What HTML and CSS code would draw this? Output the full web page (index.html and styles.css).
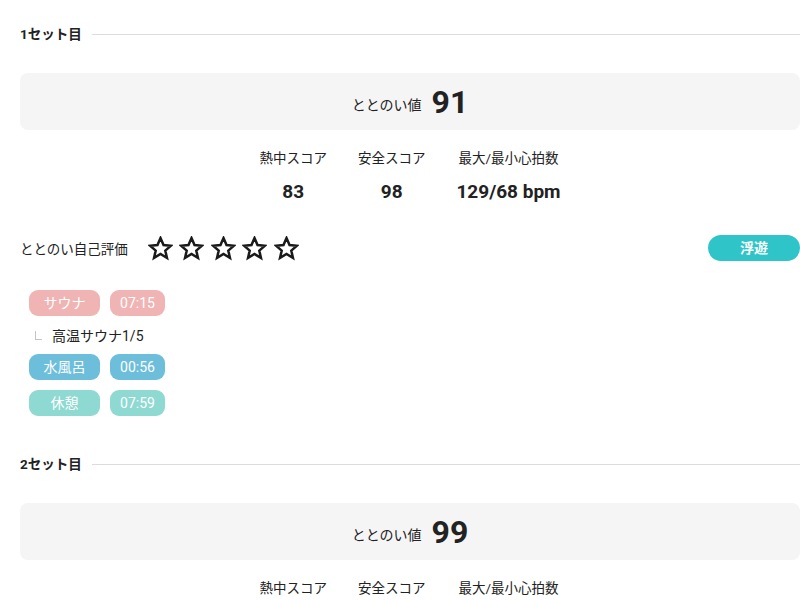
FILE: index.html
```html
<!DOCTYPE html>
<html lang="ja">
<head>
  <meta charset="UTF-8" />
  <meta name="viewport" content="width=device-width, initial-scale=1.0"/>
  <title>セット記録</title>
  <link rel="stylesheet" href="styles.css">
</head>
<body>
  <div class="page">

    <!-- 1セット目 -->
    <section class="set">
      <div class="set-head">
        <h2>1セット目</h2>
        <span class="rule"></span>
      </div>

      <div class="score-card">
        <span class="score-label">ととのい値</span>
        <span class="score-value">91</span>
      </div>

      <div class="stats">
        <div class="stat">
          <div class="stat-label">熱中スコア</div>
          <div class="stat-value">83</div>
        </div>
        <div class="stat">
          <div class="stat-label">安全スコア</div>
          <div class="stat-value">98</div>
        </div>
        <div class="stat">
          <div class="stat-label">最大/最小心拍数</div>
          <div class="stat-value">129/68 bpm</div>
        </div>
      </div>

      <div class="rating">
        <span class="rating-label">ととのい自己評価</span>
        <div class="stars">
          <svg class="star" viewBox="0 0 24 24"><polygon points="12,2 14.9,8.6 22,9.3 16.6,14 18.2,21 12,17.3 5.8,21 7.4,14 2,9.3 9.1,8.6"/></svg>
          <svg class="star" viewBox="0 0 24 24"><polygon points="12,2 14.9,8.6 22,9.3 16.6,14 18.2,21 12,17.3 5.8,21 7.4,14 2,9.3 9.1,8.6"/></svg>
          <svg class="star" viewBox="0 0 24 24"><polygon points="12,2 14.9,8.6 22,9.3 16.6,14 18.2,21 12,17.3 5.8,21 7.4,14 2,9.3 9.1,8.6"/></svg>
          <svg class="star" viewBox="0 0 24 24"><polygon points="12,2 14.9,8.6 22,9.3 16.6,14 18.2,21 12,17.3 5.8,21 7.4,14 2,9.3 9.1,8.6"/></svg>
          <svg class="star" viewBox="0 0 24 24"><polygon points="12,2 14.9,8.6 22,9.3 16.6,14 18.2,21 12,17.3 5.8,21 7.4,14 2,9.3 9.1,8.6"/></svg>
        </div>
        <span class="badge">浮遊</span>
      </div>

      <div class="steps">
        <div class="step sauna">
          <span class="pill name">サウナ</span>
          <span class="pill time">07:15</span>
        </div>
        <div class="sub">
          <span class="corner"></span>
          <span>高温サウナ1/5</span>
        </div>
        <div class="step water">
          <span class="pill name">水風呂</span>
          <span class="pill time">00:56</span>
        </div>
        <div class="step rest">
          <span class="pill name">休憩</span>
          <span class="pill time">07:59</span>
        </div>
      </div>
    </section>

    <!-- 2セット目 -->
    <section class="set">
      <div class="set-head">
        <h2>2セット目</h2>
        <span class="rule"></span>
      </div>

      <div class="score-card">
        <span class="score-label">ととのい値</span>
        <span class="score-value">99</span>
      </div>

      <div class="stats">
        <div class="stat">
          <div class="stat-label">熱中スコア</div>
          <div class="stat-value">88</div>
        </div>
        <div class="stat">
          <div class="stat-label">安全スコア</div>
          <div class="stat-value">96</div>
        </div>
        <div class="stat">
          <div class="stat-label">最大/最小心拍数</div>
          <div class="stat-value">131/70 bpm</div>
        </div>
      </div>
    </section>

  </div>
</body>
</html>
```

FILE: styles.css
```css
body {
  margin: 0;
  font-family: Roboto, "Noto Sans CJK JP", sans-serif;
  background: #fff;
  color: #222;
}
.page {
  padding: 24px 0 0 20px;
}
.set {
  margin-bottom: 38px;
}
.set-head {
  display: flex;
  align-items: center;
  height: 20px;
}
.set-head h2 {
  margin: 0;
  font-size: 13.5px;
  font-weight: 700;
  line-height: 20px;
}
.rule {
  flex: 1;
  height: 1px;
  margin-left: 10px;
  background: #dcdcdc;
}
.score-card {
  margin-top: 29px;
  height: 57px;
  background: #f5f5f5;
  border-radius: 8px;
  display: flex;
  align-items: center;
  justify-content: center;
  gap: 10px;
}
.score-label {
  font-size: 14px;
  padding-top: 4px;
}
.score-value {
  font-size: 32px;
  font-weight: 700;
}
.stats {
  margin-top: 18px;
  display: flex;
  justify-content: center;
  gap: 31px;
}
.stat {
  text-align: center;
}
.stat-label {
  font-size: 13.5px;
  line-height: 20px;
}
.stat-value {
  margin-top: 12px;
  font-size: 19px;
  font-weight: 700;
  line-height: 24px;
}
.rating {
  margin-top: 31px;
  display: flex;
  align-items: center;
  height: 26px;
}
.rating-label {
  font-size: 13.5px;
}
.stars {
  display: flex;
  gap: 6.5px;
  margin-left: 20px;
}
.star {
  width: 25px;
  height: 25px;
  fill: none;
  stroke: #1a1a1a;
  stroke-width: 2.4;
}
.badge {
  margin-left: auto;
  width: 92px;
  height: 26px;
  line-height: 26px;
  text-align: center;
  border-radius: 13px;
  background: #2ec4c8;
  color: #fff;
  font-size: 14px;
  font-weight: 700;
}
.steps {
  margin-top: 29px;
  padding-left: 9px;
  display: flex;
  flex-direction: column;
  gap: 10px;
}
.step {
  display: flex;
  gap: 10px;
}
.pill {
  height: 26px;
  line-height: 26px;
  border-radius: 9px;
  color: #fff;
  font-size: 14px;
  text-align: center;
}
.pill.name {
  width: 71px;
}
.pill.time {
  width: 55px;
}
.sauna .pill {
  background: #f0b4b4;
}
.water .pill {
  background: #6cbedb;
}
.rest .pill {
  background: #8ed9d1;
}
.sub {
  display: flex;
  align-items: center;
  height: 18px;
  font-size: 14px;
}
.corner {
  width: 6px;
  height: 8px;
  margin: 0 10px 0 6px;
  border-left: 1px solid #c4c4c4;
  border-bottom: 1px solid #c4c4c4;
}
```
